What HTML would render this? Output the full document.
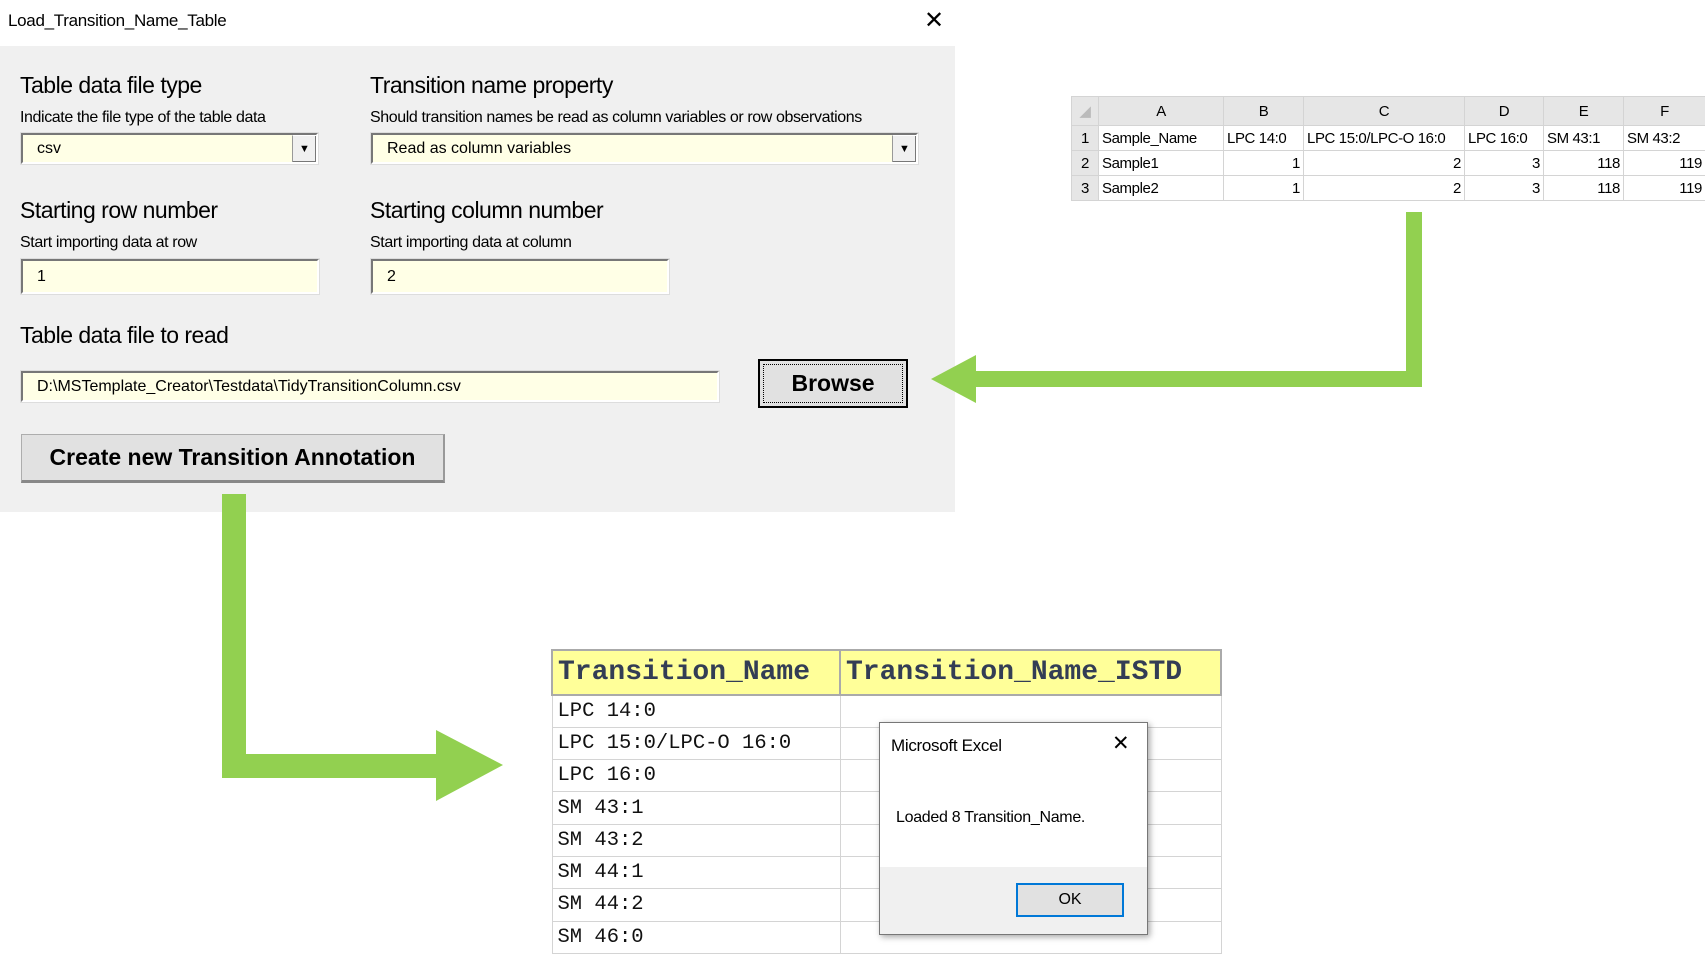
<!DOCTYPE html>
<html><head><meta charset="utf-8"><style>
*{margin:0;padding:0;box-sizing:border-box}
body{width:1705px;height:952px;background:#fff;position:relative;overflow:hidden;font-family:"Liberation Sans",sans-serif;color:#000}
.a{position:absolute;white-space:nowrap}
.h{font-size:23px;letter-spacing:-0.5px}
.s{font-size:16px;letter-spacing:-0.4px}
.in{position:absolute;background:#ffffe6;border-top:2px solid #777;border-left:2px solid #777;border-bottom:2px solid #fff;border-right:2px solid #fff;box-shadow:0 0 0 1px #ddd;font-size:16px;padding-left:14px;display:flex;align-items:center}
.dd{position:absolute;right:0;top:0;bottom:0;width:24px;background:#f0f0f0;border-left:1px solid #999;border-top:1px solid #fff;box-shadow:inset -1px -1px 0 #777;display:flex;align-items:center;justify-content:center;font-size:11px}
.g{position:absolute;background:#92d050}
.xl{position:absolute;border-collapse:collapse;font-family:"Liberation Sans",sans-serif;font-size:15px;letter-spacing:-0.4px;table-layout:fixed}
.xl td{border:1px solid #d4d4d4;height:25px;padding:0 3px;white-space:nowrap;overflow:hidden}
.t2{position:absolute;border-collapse:collapse;font-family:"Liberation Mono",monospace}
.t2 td{border:1px solid #d4d4d4;padding:0 5px;font-size:20.5px;height:32.3px;color:#111}
</style></head><body>
<div class="a" style="left:8px;top:11px;font-size:17px;letter-spacing:-0.3px">Load_Transition_Name_Table</div>
<div class="a" style="left:924px;top:6px;font-size:24px;font-weight:300">✕</div>
<div class="a" style="left:0;top:46px;width:955px;height:466px;background:#f0f0f0"></div>
<div class="a h" style="left:20px;top:72px">Table data file type</div>
<div class="a s" style="left:20px;top:109px">Indicate the file type of the table data</div>
<div class="in" style="left:21px;top:133px;width:297px;height:31px">csv<div class="dd">▼</div></div>
<div class="a h" style="left:370px;top:72px">Transition name property</div>
<div class="a s" style="left:370px;top:109px">Should transition names be read as column variables or row observations</div>
<div class="in" style="left:371px;top:133px;width:547px;height:31px">Read as column variables<div class="dd">▼</div></div>
<div class="a h" style="left:20px;top:197px">Starting row number</div>
<div class="a s" style="left:20px;top:234px">Start importing data at row</div>
<div class="in" style="left:21px;top:259px;width:298px;height:35px">1</div>
<div class="a h" style="left:370px;top:197px">Starting column number</div>
<div class="a s" style="left:370px;top:234px">Start importing data at column</div>
<div class="in" style="left:371px;top:259px;width:298px;height:35px">2</div>
<div class="a h" style="left:20px;top:322px">Table data file to read</div>
<div class="in" style="left:21px;top:371px;width:698px;height:31px">D:\MSTemplate_Creator\Testdata\TidyTransitionColumn.csv</div>
<div class="a" style="left:758px;top:359px;width:150px;height:49px;background:#e1e1e1;border:2px solid #000;display:flex;align-items:center;justify-content:center;font-weight:bold;font-size:23px"><div style="position:absolute;inset:3px;border:1px dotted #000"></div>Browse</div>
<div class="a" style="left:21px;top:434px;width:424px;height:49px;background:#e1e1e1;border:1px solid #adadad;border-bottom:3px solid #888;border-right:2px solid #999;display:flex;align-items:center;justify-content:center;font-weight:bold;font-size:23px">Create new Transition Annotation</div>
<!-- arrows -->
<div class="g" style="left:222px;top:494px;width:24px;height:284px"></div>
<div class="g" style="left:222px;top:754px;width:218px;height:24px"></div>
<svg class="a" style="left:436px;top:730px" width="68" height="71"><polygon points="0,0 67,35 0,71" fill="#92d050"/></svg>
<div class="g" style="left:1406px;top:212px;width:16px;height:175px"></div>
<div class="g" style="left:974px;top:371px;width:448px;height:16px"></div>
<svg class="a" style="left:931px;top:355px" width="45" height="48"><polygon points="45,0 0,24 45,48" fill="#92d050"/></svg>
<!-- spreadsheet -->
<table class="xl" style="left:1071px;top:96px;width:634px">
<colgroup><col style="width:27px"><col style="width:125px"><col style="width:80px"><col style="width:161px"><col style="width:79px"><col style="width:80px"><col style="width:82px"></colgroup>
<tr style="background:#e6e6e6;text-align:center"><td style="height:29px;color:#bbb">◢</td><td>A</td><td>B</td><td>C</td><td>D</td><td>E</td><td>F</td></tr>
<tr><td style="background:#e6e6e6;text-align:center">1</td><td>Sample_Name</td><td>LPC 14:0</td><td>LPC 15:0/LPC-O 16:0</td><td>LPC 16:0</td><td>SM 43:1</td><td>SM 43:2</td></tr>
<tr><td style="background:#e6e6e6;text-align:center">2</td><td>Sample1</td><td align="right">1</td><td align="right">2</td><td align="right">3</td><td align="right">118</td><td align="right">119</td></tr>
<tr><td style="background:#e6e6e6;text-align:center">3</td><td>Sample2</td><td align="right">1</td><td align="right">2</td><td align="right">3</td><td align="right">118</td><td align="right">119</td></tr>
</table>
<!-- bottom table -->
<table class="t2" style="left:551px;top:649px;width:671px">
<tr style="background:#ffff99"><td style="width:288px;height:45px;font-size:28px;font-weight:bold;color:#333d55;border:2px solid #aaa;padding:0 5px">Transition_Name</td><td style="font-size:28px;font-weight:bold;color:#333d55;border:2px solid #aaa;padding:0 5px">Transition_Name_ISTD</td></tr>
<tr><td>LPC 14:0</td><td></td></tr>
<tr><td>LPC 15:0/LPC-O 16:0</td><td></td></tr>
<tr><td>LPC 16:0</td><td></td></tr>
<tr><td>SM 43:1</td><td></td></tr>
<tr><td>SM 43:2</td><td></td></tr>
<tr><td>SM 44:1</td><td></td></tr>
<tr><td>SM 44:2</td><td></td></tr>
<tr><td>SM 46:0</td><td></td></tr>
</table>
<!-- msgbox -->
<div class="a" style="left:879px;top:722px;width:269px;height:213px;background:#fff;border:1px solid #777;box-shadow:2px 2px 6px rgba(0,0,0,.35)">
<div class="a" style="left:11px;top:13px;font-size:17px;letter-spacing:-0.3px">Microsoft Excel</div>
<div class="a" style="left:232px;top:8px;font-size:21px">✕</div>
<div class="a" style="left:16px;top:86px;font-size:16px;letter-spacing:-0.3px">Loaded 8 Transition_Name.</div>
<div class="a" style="left:0;top:144px;width:267px;height:67px;background:#f0f0f0"></div>
<div class="a" style="left:136px;top:160px;width:108px;height:34px;background:#e1e1e1;border:2px solid #0078d7;display:flex;align-items:center;justify-content:center;font-size:16px">OK</div>
</div>
</body></html>
